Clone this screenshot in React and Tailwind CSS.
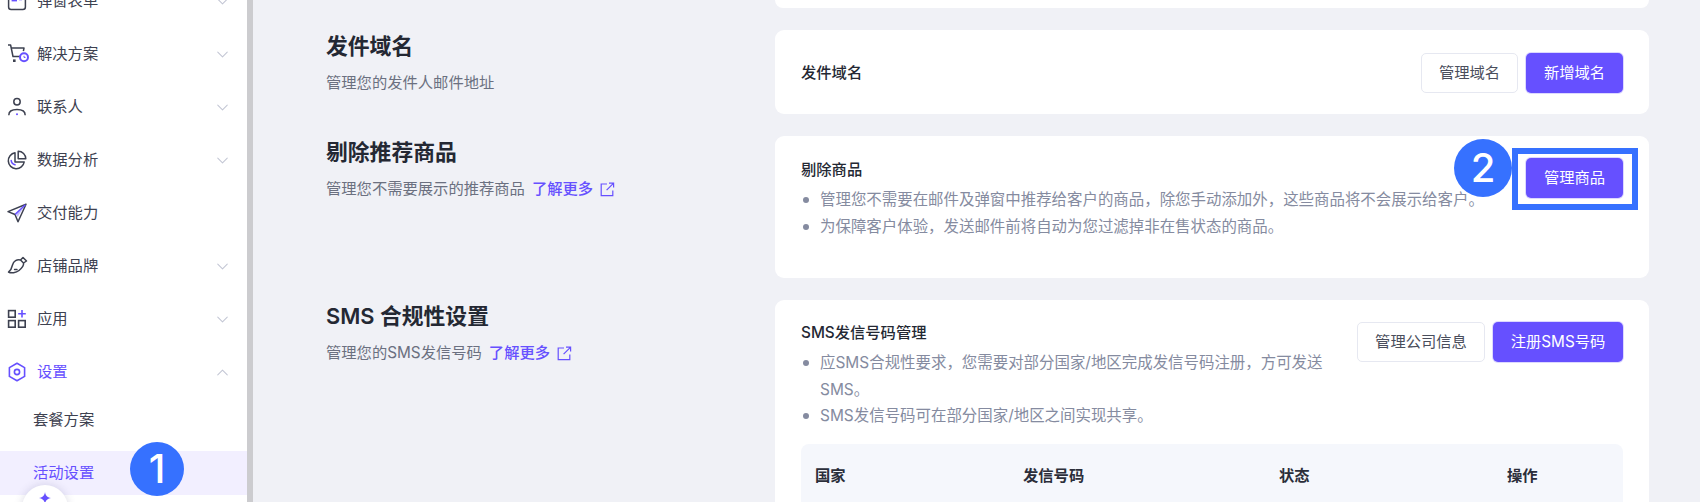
import { ChevronDown, ChevronUp } from 'lucide-react';

const INK = '#3d4150';
const PURPLE = '#6650ff';

const FormIcon = () => (
  <svg width="20" height="20" viewBox="0 0 20 20" fill="none">
    <rect x="1.6" y="1.6" width="16.8" height="16.8" rx="2.5" stroke={INK} strokeWidth="1.5" />
    <rect x="4.6" y="4" width="5.4" height="6.4" fill={PURPLE} />
    <path d="M12 5h3M12 8.5h3" stroke={PURPLE} strokeWidth="1.5" />
  </svg>
);
const CartIcon = () => (
  <svg width="22" height="20" viewBox="0 0 22 20" fill="none">
    <path d="M1 1h2.6l2.4 11.5h7.5" stroke={INK} strokeWidth="1.5" strokeLinejoin="round" />
    <path d="M4.2 4H17l-.6 3.2" stroke={INK} strokeWidth="1.5" strokeLinejoin="round" />
    <rect x="6" y="15.4" width="2.6" height="2.6" fill={INK} />
    <circle cx="17" cy="13.2" r="4" stroke={PURPLE} strokeWidth="2" fill="#fff" />
    <path d="M17 11.8v1.6h1.5" stroke={PURPLE} strokeWidth="1" />
  </svg>
);
const UserIcon = () => (
  <svg width="20" height="20" viewBox="0 0 20 20" fill="none">
    <circle cx="10" cy="4.8" r="3.2" stroke={INK} strokeWidth="1.5" />
    <path d="M1.8 18.2c0-3.6 3.4-5.6 8.2-5.6s8.2 2 8.2 5.6" stroke={INK} strokeWidth="1.5" />
    <circle cx="10" cy="17.2" r="1" fill={PURPLE} />
  </svg>
);
const PieIcon = () => (
  <svg width="20" height="20" viewBox="0 0 20 20" fill="none">
    <path d="M8 2.8a8 8 0 1 0 9.2 9.2H8z" stroke={INK} strokeWidth="1.5" strokeLinejoin="round" />
    <path d="M11.2 1.2a7.6 7.6 0 0 1 7.6 7.6h-7.6z" stroke={INK} strokeWidth="1.5" strokeLinejoin="round" />
    <path d="M4.2 10.5c.2 2.2 1.6 3.7 3.8 4.2" stroke={PURPLE} strokeWidth="1.6" strokeLinecap="round" />
  </svg>
);
const SendIcon = () => (
  <svg width="20" height="20" viewBox="0 0 20 20" fill="none">
    <path d="M19 1.2 1 8.6l7 2.9 3 7.3z" stroke={INK} strokeWidth="1.5" strokeLinejoin="round" />
    <path d="M18.4 1.8 8.2 11.4" stroke={PURPLE} strokeWidth="1.5" />
    <path d="M16.6 4.5 10.6 14l-1.6-3.6z" fill="#8a7bff" opacity="0.5" />
  </svg>
);
const BrushIcon = () => (
  <svg width="22" height="20" viewBox="0 0 22 20" fill="none">
    <path d="M5.5 9C5 11.5 4 14 1.5 16c2.5 1.5 7.5 1 10.5-1.5 3-2.5 5-5 4.5-7.5l-3-3C10 3 6.5 5 5.5 9z" stroke={INK} strokeWidth="1.5" strokeLinejoin="round" />
    <path d="M13.5 4 16 1.5 19.5 5l-3 2" stroke={INK} strokeWidth="1.5" strokeLinejoin="round" />
    <path d="M7.5 13.5h2.5" stroke={INK} strokeWidth="1.4" strokeLinecap="round" />
  </svg>
);
const AppsIcon = () => (
  <svg width="20" height="20" viewBox="0 0 20 20" fill="none">
    <rect x="1.6" y="1.6" width="6.6" height="6.6" stroke={INK} strokeWidth="1.6" />
    <rect x="1.6" y="11.6" width="6.6" height="6.6" stroke={INK} strokeWidth="1.6" />
    <rect x="11.6" y="11.6" width="6.6" height="6.6" stroke={INK} strokeWidth="1.6" />
    <path d="M15 1v7.4M11.2 4.8h7.6" stroke={PURPLE} strokeWidth="1.6" />
  </svg>
);
const SettingsIcon = () => (
  <svg width="20" height="20" viewBox="0 0 20 20" fill="none">
    <path d="M10 1.2 17.6 5.6v8.8L10 18.8 2.4 14.4V5.6z" stroke={PURPLE} strokeWidth="1.6" strokeLinejoin="round" />
    <circle cx="10" cy="10" r="2.6" stroke={PURPLE} strokeWidth="1.6" />
  </svg>
);
const LinkOut = () => (
  <svg width="15" height="15" viewBox="0 0 15 15" fill="none" className="ml-[7px] inline-block">
    <path d="M7 2H1.2v11.6h11.6V8.4" stroke={PURPLE} strokeWidth="1.2" />
    <path d="M6.6 8.2 13.4 1.4M9 1.2h4.6v4.4" stroke={PURPLE} strokeWidth="1.2" />
  </svg>
);

const navItems = [
  { label: '弹窗表单', icon: <FormIcon />, arrow: true },
  { label: '解决方案', icon: <CartIcon />, arrow: true },
  { label: '联系人', icon: <UserIcon />, arrow: true },
  { label: '数据分析', icon: <PieIcon />, arrow: true },
  { label: '交付能力', icon: <SendIcon /> },
  { label: '店铺品牌', icon: <BrushIcon />, arrow: true },
  { label: '应用', icon: <AppsIcon />, arrow: true },
];

const NavRow = ({ item }) => (
  <div className="h-[44px] flex-none flex items-center pl-[7px] pr-[15px] text-[#3d4150]">
    <div className="w-[30px] flex-none">{item.icon}</div>
    <span className="flex-1">{item.label}</span>
    {item.arrow && <ChevronDown size={19} strokeWidth={1.3} className="text-[#c3c6d4]" />}
  </div>
);

const Sidebar = () => (
  <aside className="relative w-[247px] flex-none bg-white overflow-hidden text-[15.3px]">
    <div className="-mt-[21px] flex flex-col gap-[9px]">
      {navItems.map((item) => <NavRow key={item.label} item={item} />)}
      <div className="h-[44px] flex-none flex items-center pl-[7px] pr-[15px] text-[#6650ff]">
        <div className="w-[30px] flex-none"><SettingsIcon /></div>
        <span className="flex-1">设置</span>
        <ChevronUp size={19} strokeWidth={1.3} className="text-[#c3c6d4]" />
      </div>
    </div>
    <div className="mt-[4px] h-[44px] flex items-center pl-[33px] text-[#3d4150]">套餐方案</div>
    <div className="mt-[9px] h-[44px] flex items-center pl-[33px] text-[#6650ff] bg-[#f2efff]">活动设置</div>
    <div className="absolute left-[22px] top-[485px] w-[46px] h-[46px] rounded-full bg-white shadow-[0_0_8px_rgba(60,60,110,0.18)] flex justify-center pt-[7px]">
      <svg width="12" height="12" viewBox="0 0 14 14"><path d="M7 0c.6 4 2.4 6 7 7-4.6 1-6.4 3-7 7-.6-4-2.4-6-7-7 4.6-1 6.4-3 7-7z" fill={PURPLE} /></svg>
    </div>
  </aside>
);

const Section = ({ title, desc, link, children }) => (
  <section className="flex flex-none">
    <div className="w-[449px] flex-none">
      <h2 className="mt-[1px] text-[21.8px] leading-[30px] font-semibold text-[#242833]">{title}</h2>
      <p className="mt-[7px] text-[15.3px] leading-[30px] text-[#6b7080] flex items-center">
        {desc}
        {link && <span className="ml-[7px] text-[#6650ff] font-medium">了解更多</span>}
        {link && <LinkOut />}
      </p>
    </div>
    {children}
  </section>
);

const Card = ({ className, children }) => (
  <div className={`flex-1 bg-white rounded-[9px] ${className}`}>{children}</div>
);

const Btn = ({ primary, className, children }) => (
  <div className={`h-[40px] flex items-center justify-center rounded-[5px] text-[15.3px] ${primary ? 'bg-[#6650ff] text-white shadow-[0_0_0_1px_#dcd8ff]' : 'bg-white border border-[#e6e8f1] text-[#4a4e5c]'} ${className}`}>
    {children}
  </div>
);

const Bullets = ({ items }) => (
  <ul className="mt-[4px] text-[15.45px] leading-[26.5px] text-[#858ba0]">
    {items.map((t) => (
      <li key={t} className="flex">
        <span className="w-[19px] flex-none flex pt-[10px] pl-[2px]"><span className="w-[6px] h-[6px] rounded-full bg-[#858ba0]" /></span>
        <span>{t}</span>
      </li>
    ))}
  </ul>
);

export default function App() {
  return (
    <div className="relative h-[502px] w-[1700px] overflow-hidden flex bg-[#f0f1f6] font-['Inter','Noto_Sans_CJK_SC',sans-serif]">
      <Sidebar />
      <div className="w-[6px] flex-none bg-[#cccccf]" />
      <main className="flex-1 pl-[73px] pr-[51px] flex flex-col">
        <div className="h-[8px] flex-none ml-[449px] bg-white rounded-b-[9px]" />
        <div className="h-[22px] flex-none" />
        <Section title="发件域名" desc="管理您的发件人邮件地址">
          <Card className="h-[84px] pl-[26px] pr-[26px] pt-[2px] flex items-center justify-between">
            <span className="text-[15.3px] font-medium text-[#242833]">发件域名</span>
            <div className="flex gap-[8px]">
              <Btn className="w-[97px]">管理域名</Btn>
              <Btn primary className="w-[97px]">新增域名</Btn>
            </div>
          </Card>
        </Section>
        <div className="h-[22px] flex-none" />
        <Section title="剔除推荐商品" desc="管理您不需要展示的推荐商品" link>
          <Card className="h-[142px] pl-[26px] pr-[26px] flex justify-between">
            <div className="pt-[21px]">
              <h3 className="text-[15.3px] leading-[26px] font-medium text-[#242833]">剔除商品</h3>
              <Bullets items={['管理您不需要在邮件及弹窗中推荐给客户的商品，除您手动添加外，这些商品将不会展示给客户。', '为保障客户体验，发送邮件前将自动为您过滤掉非在售状态的商品。']} />
            </div>
            <div className="pt-[22px]"><Btn primary className="w-[97px]">管理商品</Btn></div>
          </Card>
        </Section>
        <div className="h-[22px] flex-none" />
        <Section title="SMS 合规性设置" desc="管理您的SMS发信号码" link>
          <Card className="h-[260px] pl-[26px] pr-[26px] pt-[20px]">
            <div className="flex justify-between">
              <div className="w-[530px]">
                <h3 className="text-[15.3px] leading-[26px] font-medium text-[#242833]">SMS发信号码管理</h3>
                <Bullets items={['应SMS合规性要求，您需要对部分国家/地区完成发信号码注册，方可发送SMS。', 'SMS发信号码可在部分国家/地区之间实现共享。']} />
              </div>
              <div className="flex gap-[8px] pt-[2px]">
                <Btn className="w-[128px]">管理公司信息</Btn>
                <Btn primary className="w-[130px]">注册SMS号码</Btn>
              </div>
            </div>
            <div className="mt-[14px] h-[120px] rounded-[8px] bg-[#f5f7fc] pl-[14px] pt-[19px] grid grid-cols-[208px_256px_228px_1fr] text-[15.3px] font-semibold text-[#2b2e3a] leading-[26px]">
              <span>国家</span>
              <span>发信号码</span>
              <span>状态</span>
              <span>操作</span>
            </div>
          </Card>
        </Section>
      </main>
      {/* annotations */}
      <div className="absolute left-[130px] top-[442px] w-[54px] h-[54px] rounded-full bg-[#3671ff] text-white flex items-center justify-center text-[40px] font-medium">1</div>
      <div className="absolute left-[1454px] top-[139px] w-[58px] h-[58px] rounded-full bg-[#3671ff] text-white flex items-center justify-center text-[40px] font-medium">2</div>
      <div className="absolute left-[1512px] top-[148px] w-[126px] h-[62px] border-[6px] border-[#3671ff]" />
    </div>
  );
}
